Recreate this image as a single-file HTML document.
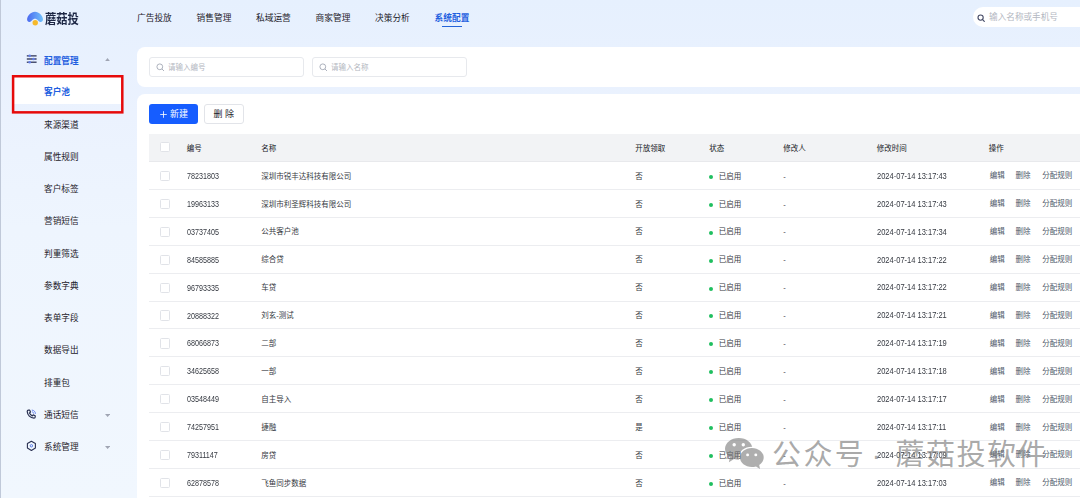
<!DOCTYPE html>
<html lang="zh-CN">
<head>
<meta charset="utf-8">
<title>蘑菇投</title>
<style>
*{box-sizing:border-box;margin:0;padding:0}
html,body{width:1080px;height:498px;overflow:hidden}
body{font-family:"Liberation Sans","Noto Sans CJK SC",sans-serif;background:linear-gradient(180deg,#e6f0fe 0%,#ebf2fe 23%,#eef5fe 46%,#f1f7fe 100%);position:relative;color:#1d2129}
.abs{position:absolute}
.leftedge{left:0;top:0;width:1px;height:498px;background:#c0c9d9}
.logo{left:45px;top:9.5px;font-size:13px;font-weight:700;color:#1d2745;line-height:18px;white-space:nowrap;transform:scaleX(.87);transform-origin:0 50%}
.nav{top:11.6px;font-size:8.7px;color:#1d2129;line-height:12px;white-space:nowrap}
.nav.act{color:#1f5fe0;font-weight:700}
.navline{left:442px;top:25.6px;width:19.5px;height:1.6px;background:#2463d9}
.search{left:972.5px;top:7.3px;width:120px;height:20px;border-radius:10px;background:#fff}
.search span{position:absolute;left:16.6px;top:5px;font-size:8.6px;color:#b3b7c1;line-height:11px;white-space:nowrap}
.mi{left:44.1px;font-size:8.65px;line-height:12px;color:#1d2129;white-space:nowrap}
.mi.b{color:#1f5fe0;font-weight:700}
.selbg{left:14px;top:77px;width:108px;height:27px;background:#fff}
.redbox{left:12px;top:75px;width:111.5px;height:38.6px;border:2.4px solid #e60a0a}
.card1{left:137px;top:47px;width:950px;height:39.5px;background:#fff;border-radius:8px 0 0 8px}
.card2{left:137px;top:94px;width:950px;height:410px;background:#fff;border-radius:8px 0 0 0}
.inp{top:57px;width:154.7px;height:19.6px;border:1px solid #e7e9ed;border-radius:3px;background:#fff}
.inp span{position:absolute;left:18px;top:4.8px;font-size:7.5px;line-height:10px;color:#b4b8bf;white-space:nowrap}
.btn1{left:149px;top:104px;width:49px;height:20px;background:#165dff;border-radius:3px;color:#fff;font-size:9px;line-height:20px;white-space:nowrap}
.btn1 span{position:absolute;left:21px;top:0.3px}
.btn2{left:203.7px;top:104px;width:40.2px;height:20px;background:#fff;border:1px solid #e2e4e9;border-radius:3px;color:#1d2129;font-size:9px;line-height:18.6px;text-align:center;white-space:nowrap}
.thead{left:149.2px;top:133.7px;width:940px;height:28.2px;background:#f2f3f5;border-bottom:1px solid #e8e9ec}
.row{left:149.2px;width:940px;height:27.93px;border-bottom:1px solid #ecedf0}
.c{position:absolute;top:0.7px;font-size:7.5px;line-height:28px;color:#353941;white-space:nowrap}
.thead .c{top:1.6px;line-height:28px;color:#16191f;font-weight:400}
.c.n{top:0;font-size:8.4px;transform:scaleX(.856);transform-origin:0 50%}
.c.t{top:-0.2px;font-size:8.4px;transform:scaleX(.897);transform-origin:0 50%}
.c.a{color:#4e5969;top:0.3px}
.cb{position:absolute;left:11.1px;top:8.9px;width:9.6px;height:10.2px;border:1px solid #e1e3e8;border-radius:1.5px;background:#fff}
.thead .cb{top:8.5px}
.dot{display:inline-block;width:4px;height:4px;border-radius:50%;background:#1fbf5f;vertical-align:middle;margin-right:5.6px;position:relative;top:0.2px}
.wm{top:434.5px;font-size:29px;line-height:40px;color:rgba(120,120,120,.64);white-space:nowrap;letter-spacing:1.5px;font-weight:400}
</style>
</head>
<body>
<div class="abs leftedge"></div>

<!-- top bar -->
<svg class="abs" style="left:22px;top:6px" width="30" height="24" viewBox="0 0 30 24">
  <defs><linearGradient id="mg" x1="0" y1="0" x2="1" y2="0"><stop offset="0" stop-color="#4c6af0"/><stop offset="1" stop-color="#6fc0fb"/></linearGradient></defs>
  <path d="M5.1 13.6 C5.1 10 9 5.8 13 5.8 C17 5.8 21 10 21 13.6 C21 15.2 19.6 16.2 18.3 15.9 C17.3 15.7 16.6 15 15.8 14.2 C15 13.4 14 12.8 13 12.8 C12 12.8 11 13.4 10.2 14.2 C9.4 15 8.7 15.7 7.7 15.9 C6.4 16.2 5.1 15.2 5.1 13.6Z" fill="url(#mg)"/>
  <circle cx="13.25" cy="16.7" r="2.7" fill="#f6b92b"/>
</svg>
<div class="abs logo">蘑菇投</div>
<div class="abs nav" style="left:137px">广告投放</div>
<div class="abs nav" style="left:196.6px">销售管理</div>
<div class="abs nav" style="left:256px">私域运营</div>
<div class="abs nav" style="left:315.6px">商家管理</div>
<div class="abs nav" style="left:375px">决策分析</div>
<div class="abs nav act" style="left:434.6px">系统配置</div>
<div class="abs navline"></div>
<div class="abs search">
  <svg class="abs" style="left:4.6px;top:6.4px" width="9" height="9" viewBox="0 0 9 9"><circle cx="3.6" cy="3.6" r="2.6" fill="none" stroke="#454a66" stroke-width="1.1"/><path d="M5.6 5.6 L7.3 7.3" stroke="#454a66" stroke-width="1.2" stroke-linecap="round"/></svg>
  <span>输入名称或手机号</span>
</div>

<!-- sidebar -->
<svg class="abs" style="left:26px;top:53px" width="12" height="12" viewBox="0 0 12 12">
  <g fill="#4b5272"><rect x="0.8" y="2.1" width="9.8" height="1.5"/><rect x="0.8" y="5.2" width="9.8" height="1.6"/><rect x="0.8" y="8.5" width="9.8" height="1.5"/></g>
  <g fill="#6580ea"><circle cx="3.7" cy="2.85" r="1.3"/><circle cx="7.5" cy="6" r="1.3"/><circle cx="3.7" cy="9.25" r="1.3"/></g>
</svg>
<div class="abs mi b" style="top:54.5px">配置管理</div>
<svg class="abs" style="left:104.9px;top:58.1px" width="5" height="3.2" viewBox="0 0 5 3.2"><path d="M0 3.2L2.5 0L5 3.2Z" fill="#a0a5b3"/></svg>
<div class="abs selbg"></div>
<div class="abs mi b" style="top:86.4px">客户池</div>
<svg class="abs" style="left:8px;top:72px" width="120" height="46" viewBox="0 0 120 46"><rect x="5.1" y="4.25" width="109.2" height="36.1" fill="none" stroke="#e60a0a" stroke-width="2.5"/></svg>
<div class="abs mi" style="top:118.70px">来源渠道</div>
<div class="abs mi" style="top:150.93px">属性规则</div>
<div class="abs mi" style="top:183.16px">客户标签</div>
<div class="abs mi" style="top:215.39px">营销短信</div>
<div class="abs mi" style="top:247.62px">判重筛选</div>
<div class="abs mi" style="top:279.85px">参数字典</div>
<div class="abs mi" style="top:312.08px">表单字段</div>
<div class="abs mi" style="top:344.31px">数据导出</div>
<div class="abs mi" style="top:376.54px">排重包</div>
<svg class="abs" style="left:26px;top:408.7px" width="11" height="11" viewBox="0 0 11 11">
  <path d="M2.4 1.2 L3.7 1.2 L4.5 3.1 L3.5 4 C4 5.2 5 6.2 6.3 6.9 L7.2 5.9 L9.2 6.7 L9.2 8 C9.2 8.7 8.7 9.2 8 9.2 C4.3 9 1.4 6.1 1.2 2.4 C1.2 1.7 1.7 1.2 2.4 1.2Z" fill="none" stroke="#2a3152" stroke-width="1.2" stroke-linejoin="round"/>
  <path d="M6.2 1.1 C8 1.3 9.3 2.6 9.5 4.4M6.3 2.9 C7.1 3 7.6 3.5 7.7 4.3" fill="none" stroke="#5a78e8" stroke-width="0.9" stroke-linecap="round"/>
</svg>
<div class="abs mi" style="top:408.6px">通话短信</div>
<svg class="abs" style="left:104.9px;top:413.7px" width="5.2" height="3" viewBox="0 0 5.2 3"><path d="M0 0L2.6 3L5.2 0Z" fill="#a0a5b3"/></svg>
<svg class="abs" style="left:26px;top:440px" width="11" height="12" viewBox="0 0 11 12">
  <path d="M5.4 1.2 L9.4 3.5 L9.4 8.1 L5.4 10.4 L1.4 8.1 L1.4 3.5 Z" fill="none" stroke="#2a3152" stroke-width="1.1" stroke-linejoin="round"/>
  <circle cx="5.4" cy="5.8" r="1.2" fill="none" stroke="#4a6ee0" stroke-width="0.9"/>
</svg>
<div class="abs mi" style="top:441px">系统管理</div>
<svg class="abs" style="left:104.9px;top:445.9px" width="5.2" height="3" viewBox="0 0 5.2 3"><path d="M0 0L2.6 3L5.2 0Z" fill="#a0a5b3"/></svg>

<!-- cards -->
<div class="abs card1"></div>
<div class="abs card2"></div>
<div class="abs inp" style="left:149px">
  <svg class="abs" style="left:5.8px;top:4.6px" width="9" height="9" viewBox="0 0 9 9"><circle cx="3.8" cy="3.8" r="2.9" fill="none" stroke="#adb2bd" stroke-width="1"/><path d="M5.9 5.9L8 8" stroke="#adb2bd" stroke-width="1"/></svg>
  <span>请输入编号</span>
</div>
<div class="abs inp" style="left:312px">
  <svg class="abs" style="left:5.8px;top:4.6px" width="9" height="9" viewBox="0 0 9 9"><circle cx="3.8" cy="3.8" r="2.9" fill="none" stroke="#adb2bd" stroke-width="1"/><path d="M5.9 5.9L8 8" stroke="#adb2bd" stroke-width="1"/></svg>
  <span>请输入名称</span>
</div>
<div class="abs btn1"><svg class="abs" style="left:10.6px;top:6.6px" width="7" height="7" viewBox="0 0 7 7"><path d="M3.5 0.2V6.8M0.2 3.5H6.8" stroke="#fff" stroke-width="0.8"/></svg><span>新建</span></div>
<div class="abs btn2">删 除</div>

<!-- table -->
<div class="abs thead">
  <div class="cb"></div>
  <div class="c" style="left:37.6px">编号</div>
  <div class="c" style="left:112px">名称</div>
  <div class="c" style="left:486px">开放领取</div>
  <div class="c" style="left:560px">状态</div>
  <div class="c" style="left:634px">修改人</div>
  <div class="c" style="left:727.6px">修改时间</div>
  <div class="c" style="left:839.6px">操作</div>
</div>
<div class="abs row" style="top:161.90px"><div class="cb"></div><div class="c n" style="left:37.6px">78231803</div><div class="c" style="left:112px">深圳市锐丰达科技有限公司</div><div class="c" style="left:486px">否</div><div class="c" style="left:560px"><i class="dot"></i>已启用</div><div class="c" style="left:634px">-</div><div class="c t" style="left:727.6px">2024-07-14 13:17:43</div><div class="c a" style="left:840.6px">编辑</div><div class="c a" style="left:866.4px">删除</div><div class="c a" style="left:893px">分配规则</div></div>
<div class="abs row" style="top:189.83px"><div class="cb"></div><div class="c n" style="left:37.6px">19963133</div><div class="c" style="left:112px">深圳市利圣辉科技有限公司</div><div class="c" style="left:486px">否</div><div class="c" style="left:560px"><i class="dot"></i>已启用</div><div class="c" style="left:634px">-</div><div class="c t" style="left:727.6px">2024-07-14 13:17:43</div><div class="c a" style="left:840.6px">编辑</div><div class="c a" style="left:866.4px">删除</div><div class="c a" style="left:893px">分配规则</div></div>
<div class="abs row" style="top:217.76px"><div class="cb"></div><div class="c n" style="left:37.6px">03737405</div><div class="c" style="left:112px">公共客户池</div><div class="c" style="left:486px">否</div><div class="c" style="left:560px"><i class="dot"></i>已启用</div><div class="c" style="left:634px">-</div><div class="c t" style="left:727.6px">2024-07-14 13:17:34</div><div class="c a" style="left:840.6px">编辑</div><div class="c a" style="left:866.4px">删除</div><div class="c a" style="left:893px">分配规则</div></div>
<div class="abs row" style="top:245.69px"><div class="cb"></div><div class="c n" style="left:37.6px">84585885</div><div class="c" style="left:112px">综合贷</div><div class="c" style="left:486px">否</div><div class="c" style="left:560px"><i class="dot"></i>已启用</div><div class="c" style="left:634px">-</div><div class="c t" style="left:727.6px">2024-07-14 13:17:22</div><div class="c a" style="left:840.6px">编辑</div><div class="c a" style="left:866.4px">删除</div><div class="c a" style="left:893px">分配规则</div></div>
<div class="abs row" style="top:273.62px"><div class="cb"></div><div class="c n" style="left:37.6px">96793335</div><div class="c" style="left:112px">车贷</div><div class="c" style="left:486px">否</div><div class="c" style="left:560px"><i class="dot"></i>已启用</div><div class="c" style="left:634px">-</div><div class="c t" style="left:727.6px">2024-07-14 13:17:22</div><div class="c a" style="left:840.6px">编辑</div><div class="c a" style="left:866.4px">删除</div><div class="c a" style="left:893px">分配规则</div></div>
<div class="abs row" style="top:301.55px"><div class="cb"></div><div class="c n" style="left:37.6px">20888322</div><div class="c" style="left:112px">刘玄-测试</div><div class="c" style="left:486px">否</div><div class="c" style="left:560px"><i class="dot"></i>已启用</div><div class="c" style="left:634px">-</div><div class="c t" style="left:727.6px">2024-07-14 13:17:21</div><div class="c a" style="left:840.6px">编辑</div><div class="c a" style="left:866.4px">删除</div><div class="c a" style="left:893px">分配规则</div></div>
<div class="abs row" style="top:329.48px"><div class="cb"></div><div class="c n" style="left:37.6px">68066873</div><div class="c" style="left:112px">二部</div><div class="c" style="left:486px">否</div><div class="c" style="left:560px"><i class="dot"></i>已启用</div><div class="c" style="left:634px">-</div><div class="c t" style="left:727.6px">2024-07-14 13:17:19</div><div class="c a" style="left:840.6px">编辑</div><div class="c a" style="left:866.4px">删除</div><div class="c a" style="left:893px">分配规则</div></div>
<div class="abs row" style="top:357.41px"><div class="cb"></div><div class="c n" style="left:37.6px">34625658</div><div class="c" style="left:112px">一部</div><div class="c" style="left:486px">否</div><div class="c" style="left:560px"><i class="dot"></i>已启用</div><div class="c" style="left:634px">-</div><div class="c t" style="left:727.6px">2024-07-14 13:17:18</div><div class="c a" style="left:840.6px">编辑</div><div class="c a" style="left:866.4px">删除</div><div class="c a" style="left:893px">分配规则</div></div>
<div class="abs row" style="top:385.34px"><div class="cb"></div><div class="c n" style="left:37.6px">03548449</div><div class="c" style="left:112px">自主导入</div><div class="c" style="left:486px">否</div><div class="c" style="left:560px"><i class="dot"></i>已启用</div><div class="c" style="left:634px">-</div><div class="c t" style="left:727.6px">2024-07-14 13:17:17</div><div class="c a" style="left:840.6px">编辑</div><div class="c a" style="left:866.4px">删除</div><div class="c a" style="left:893px">分配规则</div></div>
<div class="abs row" style="top:413.27px"><div class="cb"></div><div class="c n" style="left:37.6px">74257951</div><div class="c" style="left:112px">捷融</div><div class="c" style="left:486px">是</div><div class="c" style="left:560px"><i class="dot"></i>已启用</div><div class="c" style="left:634px">-</div><div class="c t" style="left:727.6px">2024-07-14 13:17:11</div><div class="c a" style="left:840.6px">编辑</div><div class="c a" style="left:866.4px">删除</div><div class="c a" style="left:893px">分配规则</div></div>
<div class="abs row" style="top:441.20px"><div class="cb"></div><div class="c n" style="left:37.6px">79311147</div><div class="c" style="left:112px">房贷</div><div class="c" style="left:486px">否</div><div class="c" style="left:560px"><i class="dot"></i>已启用</div><div class="c" style="left:634px">-</div><div class="c t" style="left:727.6px">2024-07-14 13:17:09</div><div class="c a" style="left:840.6px">编辑</div><div class="c a" style="left:866.4px">删除</div><div class="c a" style="left:893px">分配规则</div></div>
<div class="abs row" style="top:469.13px"><div class="cb"></div><div class="c n" style="left:37.6px">62878578</div><div class="c" style="left:112px">飞鱼同步数据</div><div class="c" style="left:486px">否</div><div class="c" style="left:560px"><i class="dot"></i>已启用</div><div class="c" style="left:634px">-</div><div class="c t" style="left:727.6px">2024-07-14 13:17:03</div><div class="c a" style="left:840.6px">编辑</div><div class="c a" style="left:866.4px">删除</div><div class="c a" style="left:893px">分配规则</div></div>

<!-- watermark -->
<svg class="abs" style="left:722px;top:434px" width="46" height="38" viewBox="0 0 46 38">
  <defs>
    <mask id="m1"><rect width="46" height="38" fill="#fff"/><ellipse cx="29.85" cy="23.5" rx="13.2" ry="10.8" fill="#000"/><circle cx="12.2" cy="10.7" r="1.7" fill="#000"/><circle cx="21.3" cy="10.7" r="1.7" fill="#000"/></mask>
    <mask id="m2"><rect width="46" height="38" fill="#fff"/><circle cx="25.6" cy="20.9" r="1.45" fill="#000"/><circle cx="33.8" cy="20.9" r="1.45" fill="#000"/></mask>
  </defs>
  <g fill="rgba(120,120,120,.6)">
    <path mask="url(#m1)" d="M16.75 4 C9.2 4 3 8.9 3 14.85 C3 18.2 4.9 21.2 7.9 23.2 L6.9 28.3 L12 25 C13.5 25.5 15.1 25.7 16.75 25.7 C24.3 25.7 30.5 20.8 30.5 14.85 C30.5 8.9 24.3 4 16.75 4Z"/>
    <path mask="url(#m2)" d="M29.85 14 C23.3 14 18 18.3 18 23.5 C18 28.7 23.3 33 29.85 33 C31.3 33 32.7 32.8 34 32.4 L38 35 L37.2 31 C39.9 29.2 41.7 26.5 41.7 23.5 C41.7 18.3 36.4 14 29.85 14Z"/>
  </g>
</svg>
<div class="abs wm" style="left:772px;letter-spacing:2.4px">公众号</div>
<div class="abs wm" style="left:895.6px">蘑菇投软件</div>
<div class="abs wm" style="left:871.5px;letter-spacing:0">·</div>
</body>
</html>
